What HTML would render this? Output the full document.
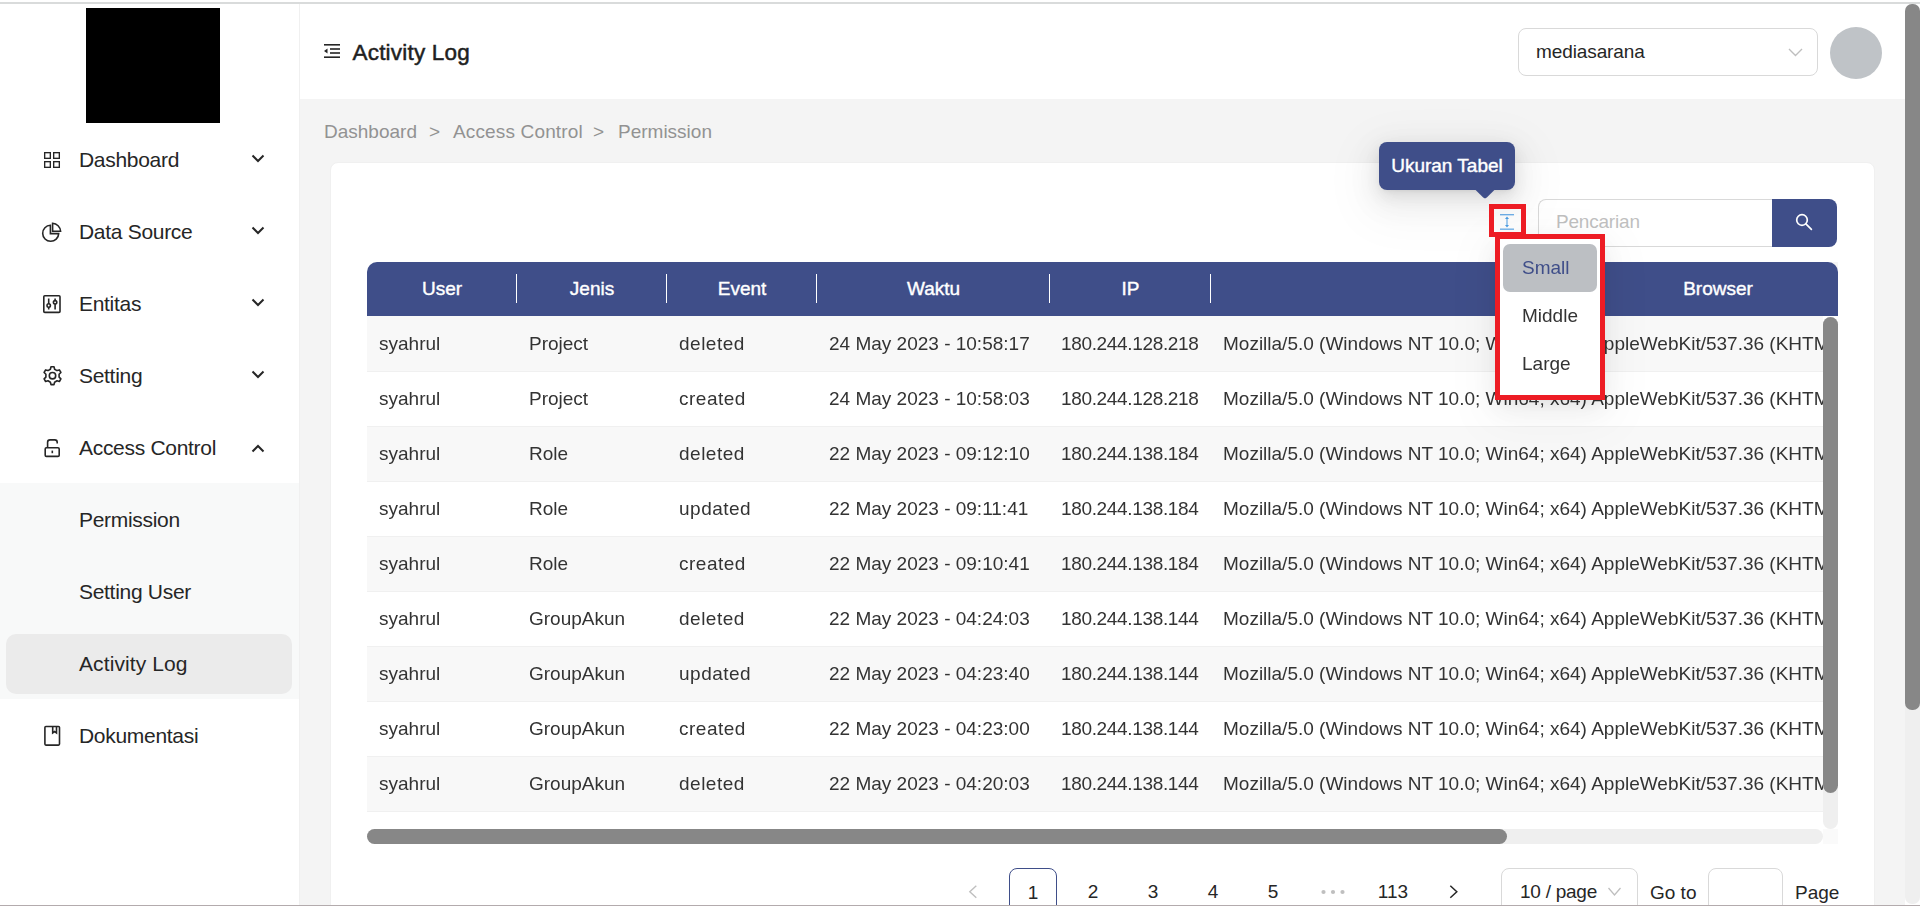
<!DOCTYPE html>
<html><head><meta charset="utf-8">
<style>
*{box-sizing:border-box;margin:0;padding:0}
html,body{width:1920px;height:906px;overflow:hidden;background:#fff;font-family:"Liberation Sans",sans-serif;color:#262626}
.abs{position:absolute}
#topline{left:0;top:2px;width:1920px;height:2px;background:#d9dbdb;z-index:50}
#botline{left:0;top:905px;width:1920px;height:1px;background:#b3abad;z-index:50}
#sidebar{left:0;top:0;width:300px;height:906px;background:#fff;border-right:1px solid #f0f0f0}
#logo{left:86px;top:8px;width:134px;height:115px;background:#000}
.mi{position:absolute;left:0;width:299px;height:60px;font-size:21px;letter-spacing:-0.3px;color:#262626}
.mi .t{position:absolute;left:79px;top:0px;line-height:60px;white-space:nowrap}
.mi svg.ic{position:absolute;left:42px}
.mi svg.ch{position:absolute;left:251px;top:24px}
#submenu{left:0;top:483px;width:299px;height:216px;background:#f8f9f9}
#active{left:6px;top:634px;width:286px;height:60px;background:#ebebeb;border-radius:10px}
#header{left:300px;top:0;width:1605px;height:99px;background:#fff}
#content{left:300px;top:99px;width:1605px;height:807px;background:#f4f4f4}
#vscroll{left:1905px;top:4px;width:15px;height:900px;background:#efefef;border-radius:7px}
#vthumb{left:1905px;top:4px;width:15px;height:706px;background:#878787;border-radius:7px}
#card{left:330px;top:162px;width:1545px;height:760px;background:#fff;border-radius:8px;border:1px solid #f0f0f0}
.bc{position:absolute;top:120px;font-size:19px;color:#929292;line-height:24px;white-space:nowrap}
#thead{left:367px;top:262px;width:1471px;height:54px;background:#3f4e89;border-radius:10px 10px 0 0}
.th{position:absolute;top:262px;height:54px;line-height:54px;color:#fff;font-size:19px;-webkit-text-stroke:0.4px #fff;text-align:center;white-space:nowrap}
.sep{position:absolute;top:274px;width:1px;height:29px;background:#fff}
.row{position:absolute;left:367px;width:1456px;height:55px;border-bottom:1px solid #f0f0f0;overflow:hidden;will-change:transform}
.row.odd{background:#f8f8f8}
.row span{position:absolute;top:0px;line-height:54px;font-size:19px;color:#333;white-space:nowrap}
.row .c1{left:12px}.row .c2{left:162px}.row .c3{left:312px;letter-spacing:0.5px}.row .c4{left:462px}.row .c5{left:694px;letter-spacing:-0.34px}.row .c6{left:856px}
#title{left:352.5px;top:39px;font-size:22.5px;-webkit-text-stroke:0.5px #1f1f1f;letter-spacing:0.2px;color:#1f1f1f;line-height:28px;white-space:nowrap}
#sel{left:1518px;top:28px;width:300px;height:48px;border:1px solid #d9d9d9;border-radius:8px;background:#fff}
#sel span{position:absolute;left:17px;top:0;line-height:46px;font-size:19px;letter-spacing:-0.1px;color:#262626}
#avatar{left:1830px;top:27px;width:52px;height:52px;border-radius:50%;background:#bfc3c7}
#search{left:1538px;top:199px;width:235px;height:48px;border:1px solid #d9d9d9;border-right:none;border-radius:8px 0 0 8px;background:#fff}
#search span{position:absolute;left:17px;top:-1px;line-height:46px;font-size:19px;letter-spacing:-0.2px;color:#bfbfbf}
#sbtn{left:1772px;top:199px;width:65px;height:48px;background:#3f4e89;border-radius:0 8px 8px 0}
#hsb{left:367px;top:829px;width:1456px;height:15px;background:#efefef;border-radius:8px}
#hthumb{left:367px;top:829px;width:1140px;height:15px;background:#878787;border-radius:8px}
#vsb{left:1823px;top:317px;width:15px;height:512px;background:#efefef;border-radius:8px}
#vsthumb{left:1823px;top:317px;width:15px;height:476px;background:#878787;border-radius:8px}
#sbcorner{left:1823px;top:829px;width:15px;height:15px;background:#fafafa}
.pg{top:877px;width:48px;text-align:center;font-size:19px;line-height:30px;color:#262626}
#pg1{left:1009px;top:868px;width:48px;height:48px;border:1px solid #3f4e89;border-radius:8px;text-align:center;line-height:48px;font-size:19px;color:#262626}
#pps{left:1501px;top:868px;width:137px;height:48px;border:1px solid #d9d9d9;border-radius:8px;background:#fff}
#pps span{position:absolute;left:18px;line-height:46px;font-size:19px;letter-spacing:-0.25px}
#goto{left:1650px;top:878px;font-size:19px;line-height:30px}
#gotoin{left:1708px;top:868px;width:75px;height:48px;border:1px solid #d9d9d9;border-radius:8px}
#pagelbl{left:1795px;top:878px;font-size:19px;line-height:30px}
#tip{left:1379px;top:142px;width:136px;height:48px;background:#3f4e89;border-radius:8px;color:#fff;font-size:19px;-webkit-text-stroke:0.4px #fff;text-align:center;line-height:48px;box-shadow:0 6px 16px rgba(0,0,0,.08),0 3px 6px -4px rgba(0,0,0,.12),0 9px 28px 8px rgba(0,0,0,.05),0 14px 48px 18px rgba(0,0,0,.035)}

#menu{left:1500px;top:239px;width:100px;height:156px;background:#fff;box-shadow:0 6px 16px rgba(0,0,0,.08),0 3px 6px -4px rgba(0,0,0,.12),0 9px 28px 8px rgba(0,0,0,.05),0 14px 48px 18px rgba(0,0,0,.03)}
#msmall{position:absolute;left:3px;top:5px;width:94px;height:48px;border-radius:7px;background:#bcbfc3;color:#3f4e89;font-size:19px;line-height:48px;padding-left:19px}
.mitem{position:absolute;left:3px;width:94px;height:48px;font-size:19px;line-height:48px;padding-left:19px;color:#333}
#redicon{left:1489px;top:204px;width:37px;height:33px;border:5px solid #ed1c24}
#redmenu{left:1495px;top:234px;width:110px;height:166px;border:5px solid #ed1c24}
</style></head>
<body>
<div id="sidebar" class="abs"></div>
<div id="logo" class="abs"></div>
<div id="submenu" class="abs"></div>
<div id="active" class="abs"></div>
<div class="mi" style="top:130px"><svg class="ic" style="top:21px" width="20" height="20" viewBox="0 0 20 20"><g fill="none" stroke="#262626" stroke-width="1.35"><rect x="2.67" y="1.67" width="5.66" height="5.66"/><rect x="11.67" y="1.67" width="5.66" height="5.66"/><rect x="2.67" y="10.67" width="5.66" height="5.66"/><rect x="11.67" y="10.67" width="5.66" height="5.66"/></g></svg><span class="t">Dashboard</span><svg class="ch" width="14" height="9" viewBox="0 0 14 9"><path d="M1.5 1.5 L7 7 L12.5 1.5" fill="none" stroke="#262626" stroke-width="2"/></svg></div>
<div class="mi" style="top:202px"><svg class="ic" style="top:19px;left:41px" width="22" height="22" viewBox="0 0 22 22"><g fill="none" stroke="#262626" stroke-width="1.6"><path d="M9.4 4.3 A8 8 0 1 0 17.7 12.6 L9.4 12.6 Z"/><path d="M11.6 2.3 A8.6 8.6 0 0 1 19.6 10.3 L11.6 10.3 Z"/></g></svg><span class="t">Data Source</span><svg class="ch" width="14" height="9" viewBox="0 0 14 9"><path d="M1.5 1.5 L7 7 L12.5 1.5" fill="none" stroke="#262626" stroke-width="2"/></svg></div>
<div class="mi" style="top:274px"><svg class="ic" style="top:20px" width="22" height="22" viewBox="0 0 22 22"><g fill="none" stroke="#262626" stroke-width="1.6"><rect x="1.8" y="1.8" width="16.2" height="16.6" rx="1"/><path d="M6.7 4.4 V15.4 M13.1 4.4 V15.4"/><circle cx="6.7" cy="11.5" r="1.7" fill="#fff"/><circle cx="13.1" cy="8.3" r="1.7" fill="#fff"/></g></svg><span class="t">Entitas</span><svg class="ch" width="14" height="9" viewBox="0 0 14 9"><path d="M1.5 1.5 L7 7 L12.5 1.5" fill="none" stroke="#262626" stroke-width="2"/></svg></div>
<div class="mi" style="top:346px"><svg class="ic" style="top:19px" width="22" height="22" viewBox="0 0 22 22"><g fill="none" stroke="#262626" stroke-width="1.6" stroke-linejoin="round"><path d="M9 1.8 H12 L12.6 4.2 L15 5.6 L17.4 4.9 L18.9 7.5 L17.1 9.3 V12.1 L18.9 13.9 L17.4 16.5 L15 15.8 L12.6 17.2 L12 19.6 H9 L8.4 17.2 L6 15.8 L3.6 16.5 L2.1 13.9 L3.9 12.1 V9.3 L2.1 7.5 L3.6 4.9 L6 5.6 L8.4 4.2 Z"/><circle cx="10.5" cy="10.7" r="3.2"/></g></svg><span class="t">Setting</span><svg class="ch" width="14" height="9" viewBox="0 0 14 9"><path d="M1.5 1.5 L7 7 L12.5 1.5" fill="none" stroke="#262626" stroke-width="2"/></svg></div>
<div class="mi" style="top:418px"><svg class="ic" style="top:18px" width="22" height="22" viewBox="0 0 22 22"><g fill="none" stroke="#262626" stroke-width="1.6"><rect x="3.2" y="11.8" width="14" height="8.6" rx="1.2"/><path d="M5.6 11.8 V6.2 Q5.6 3.9 8 3.9 H12.8 Q15.2 3.9 15.2 6.2 V7.5"/></g><rect x="9.5" y="14.6" width="1.6" height="2.6" fill="#262626"/></svg><span class="t">Access Control</span><svg class="ch" style="top:26px" width="14" height="9" viewBox="0 0 14 9"><path d="M1.5 7.5 L7 2 L12.5 7.5" fill="none" stroke="#262626" stroke-width="2"/></svg></div>
<div class="mi" style="top:490px"><span class="t">Permission</span></div>
<div class="mi" style="top:562px"><span class="t">Setting User</span></div>
<div class="mi" style="top:634px"><span class="t"><span style="letter-spacing:0.1px">Activity Log</span></span></div>
<div class="mi" style="top:706px"><svg class="ic" style="top:19px" width="22" height="22" viewBox="0 0 22 22"><g fill="none" stroke="#262626" stroke-width="1.6"><rect x="2.9" y="1.5" width="14.6" height="18.6" rx="1"/><path d="M10.7 1.5 V8 L12.6 6.6 L14.5 8 V1.5"/></g></svg><span class="t">Dokumentasi</span></div>
<div id="header" class="abs"></div>
<div id="content" class="abs"></div>
<div id="card" class="abs"></div>
<div class="bc" style="left:324px">Dashboard</div>
<div class="bc" style="left:429px">&gt;</div>
<div class="bc" style="left:453px;letter-spacing:0.15px">Access Control</div>
<div class="bc" style="left:593px">&gt;</div>
<div class="bc" style="left:618px">Permission</div>
<svg class="abs" style="left:323px;top:43px" width="18" height="16" viewBox="0 0 18 16"><g fill="#262626"><rect x="1" y="1" width="16" height="1.6"/><rect x="7" y="5.2" width="10" height="1.6"/><rect x="7" y="9.2" width="10" height="1.6"/><rect x="1" y="13.4" width="16" height="1.6"/><path d="M1 8 L4.5 5.6 V10.4 Z"/></g></svg>
<div class="abs" id="title">Activity Log</div>
<div class="abs" id="sel"><span>mediasarana</span><svg style="position:absolute;left:269px;top:19px" width="15" height="9" viewBox="0 0 15 9"><path d="M1 1 L7.5 7.5 L14 1" fill="none" stroke="#bfbfbf" stroke-width="1.4"/></svg></div>
<div class="abs" id="avatar"></div>
<div class="abs" id="search"><span>Pencarian</span></div>
<div class="abs" id="sbtn"><svg style="position:absolute;left:20px;top:11px" width="24" height="24" viewBox="0 0 24 24"><g fill="none" stroke="#fff" stroke-width="1.7"><circle cx="10" cy="10" r="5.3"/><path d="M13.9 13.9 L19.4 19.4" stroke-linecap="round"/></g></svg></div>
<svg class="abs" style="left:1497px;top:211px" width="20" height="22" viewBox="0 0 20 22"><g fill="#4fa0e6"><rect x="3" y="3.2" width="14" height="1.1"/><rect x="3" y="17.6" width="14" height="1.1"/><rect x="9.5" y="7" width="1" height="8"/><path d="M10 5.6 L12 7.9 H8 Z M10 16.4 L12 14.1 H8 Z"/></g></svg>
<div class="abs" style="left:1826px;top:262px;width:12px;height:12px;background:#f5f5f5"></div><div id="thead" class="abs"></div>
<div class="th" style="left:367px;width:150px">User</div>
<div class="sep" style="left:516px"></div>
<div class="th" style="left:517px;width:150px">Jenis</div>
<div class="sep" style="left:666px"></div>
<div class="th" style="left:667px;width:150px">Event</div>
<div class="sep" style="left:816px"></div>
<div class="th" style="left:817px;width:233px">Waktu</div>
<div class="sep" style="left:1049px"></div>
<div class="th" style="left:1050px;width:161px">IP</div>
<div class="sep" style="left:1210px"></div>
<div class="th" style="left:1211px;width:1014px">Browser</div>
<div class="abs" style="left:1838px;top:262px;width:36px;height:60px;background:#fff"></div>
<div class="row odd" style="top:317px"><span class="c1">syahrul</span><span class="c2">Project</span><span class="c3">deleted</span><span class="c4">24 May 2023 - 10:58:17</span><span class="c5">180.244.128.218</span><span class="c6">Mozilla/5.0 (Windows NT 10.0; Win64; x64) AppleWebKit/537.36 (KHTML, like Gecko)</span></div>
<div class="row" style="top:372px"><span class="c1">syahrul</span><span class="c2">Project</span><span class="c3">created</span><span class="c4">24 May 2023 - 10:58:03</span><span class="c5">180.244.128.218</span><span class="c6">Mozilla/5.0 (Windows NT 10.0; Win64; x64) AppleWebKit/537.36 (KHTML, like Gecko)</span></div>
<div class="row odd" style="top:427px"><span class="c1">syahrul</span><span class="c2">Role</span><span class="c3">deleted</span><span class="c4">22 May 2023 - 09:12:10</span><span class="c5">180.244.138.184</span><span class="c6">Mozilla/5.0 (Windows NT 10.0; Win64; x64) AppleWebKit/537.36 (KHTML, like Gecko)</span></div>
<div class="row" style="top:482px"><span class="c1">syahrul</span><span class="c2">Role</span><span class="c3">updated</span><span class="c4">22 May 2023 - 09:11:41</span><span class="c5">180.244.138.184</span><span class="c6">Mozilla/5.0 (Windows NT 10.0; Win64; x64) AppleWebKit/537.36 (KHTML, like Gecko)</span></div>
<div class="row odd" style="top:537px"><span class="c1">syahrul</span><span class="c2">Role</span><span class="c3">created</span><span class="c4">22 May 2023 - 09:10:41</span><span class="c5">180.244.138.184</span><span class="c6">Mozilla/5.0 (Windows NT 10.0; Win64; x64) AppleWebKit/537.36 (KHTML, like Gecko)</span></div>
<div class="row" style="top:592px"><span class="c1">syahrul</span><span class="c2">GroupAkun</span><span class="c3">deleted</span><span class="c4">22 May 2023 - 04:24:03</span><span class="c5">180.244.138.144</span><span class="c6">Mozilla/5.0 (Windows NT 10.0; Win64; x64) AppleWebKit/537.36 (KHTML, like Gecko)</span></div>
<div class="row odd" style="top:647px"><span class="c1">syahrul</span><span class="c2">GroupAkun</span><span class="c3">updated</span><span class="c4">22 May 2023 - 04:23:40</span><span class="c5">180.244.138.144</span><span class="c6">Mozilla/5.0 (Windows NT 10.0; Win64; x64) AppleWebKit/537.36 (KHTML, like Gecko)</span></div>
<div class="row" style="top:702px"><span class="c1">syahrul</span><span class="c2">GroupAkun</span><span class="c3">created</span><span class="c4">22 May 2023 - 04:23:00</span><span class="c5">180.244.138.144</span><span class="c6">Mozilla/5.0 (Windows NT 10.0; Win64; x64) AppleWebKit/537.36 (KHTML, like Gecko)</span></div>
<div class="row odd" style="top:757px"><span class="c1">syahrul</span><span class="c2">GroupAkun</span><span class="c3">deleted</span><span class="c4">22 May 2023 - 04:20:03</span><span class="c5">180.244.138.144</span><span class="c6">Mozilla/5.0 (Windows NT 10.0; Win64; x64) AppleWebKit/537.36 (KHTML, like Gecko)</span></div>
<div class="abs" style="left:367px;top:316px;width:1456px;height:1px;background:#f8f8f8"></div>
<div class="abs" id="hsb"></div><div class="abs" id="hthumb"></div>
<div class="abs" id="vsb"></div><div class="abs" id="vsthumb"></div>
<div class="abs" id="sbcorner"></div>
<svg class="abs" style="left:966px;top:884px" width="14" height="16" viewBox="0 0 14 16"><path d="M10.3 1.8 L3.8 7.8 L10.3 13.8" fill="none" stroke="#bfbfbf" stroke-width="1.4"/></svg>
<div class="abs" id="pg1">1</div>
<div class="abs pg" style="left:1069px">2</div>
<div class="abs pg" style="left:1129px">3</div>
<div class="abs pg" style="left:1189px">4</div>
<div class="abs pg" style="left:1249px">5</div>
<svg class="abs" style="left:1318px;top:886px" width="30" height="12" viewBox="0 0 30 12"><g fill="#bfbfbf"><circle cx="5.5" cy="6" r="2.1"/><circle cx="15" cy="6" r="2.1"/><circle cx="24.5" cy="6" r="2.1"/></g></svg>
<div class="abs pg" style="left:1369px">113</div>
<svg class="abs" style="left:1447px;top:884px" width="14" height="16" viewBox="0 0 14 16"><path d="M3.3 1.8 L9.8 7.8 L3.3 13.8" fill="none" stroke="#262626" stroke-width="1.5"/></svg>
<div class="abs" id="pps"><span>10 / page</span><svg style="position:absolute;left:105px;top:18px" width="15" height="10" viewBox="0 0 15 10"><path d="M1.5 1 L7.5 8 L13.5 1" fill="none" stroke="#bfbfbf" stroke-width="1.3"/></svg></div>
<div class="abs" id="goto">Go to</div>
<div class="abs" id="gotoin"></div>
<div class="abs" id="pagelbl">Page</div>
<div class="abs" id="tip">Ukuran Tabel</div>
<svg class="abs" style="left:1470px;top:189px" width="30" height="12" viewBox="0 0 30 12"><path d="M4.6 0 L13.2 8.6 Q15 10.2 16.8 8.6 L25.4 0 Z" fill="#3f4e89"/></svg>
<div class="abs" id="menu"><div id="msmall">Small</div><div class="mitem" style="top:53px">Middle</div><div class="mitem" style="top:101px">Large</div></div>
<div class="abs" id="redicon"></div>
<div class="abs" id="redmenu"></div>
<div id="vscroll" class="abs"></div>
<div id="vthumb" class="abs"></div>
<div class="abs" style="left:0;top:0;width:1920px;height:2px;background:#fff;z-index:50"></div><div id="topline" class="abs"></div>
<div id="botline" class="abs"></div>
</body></html>
